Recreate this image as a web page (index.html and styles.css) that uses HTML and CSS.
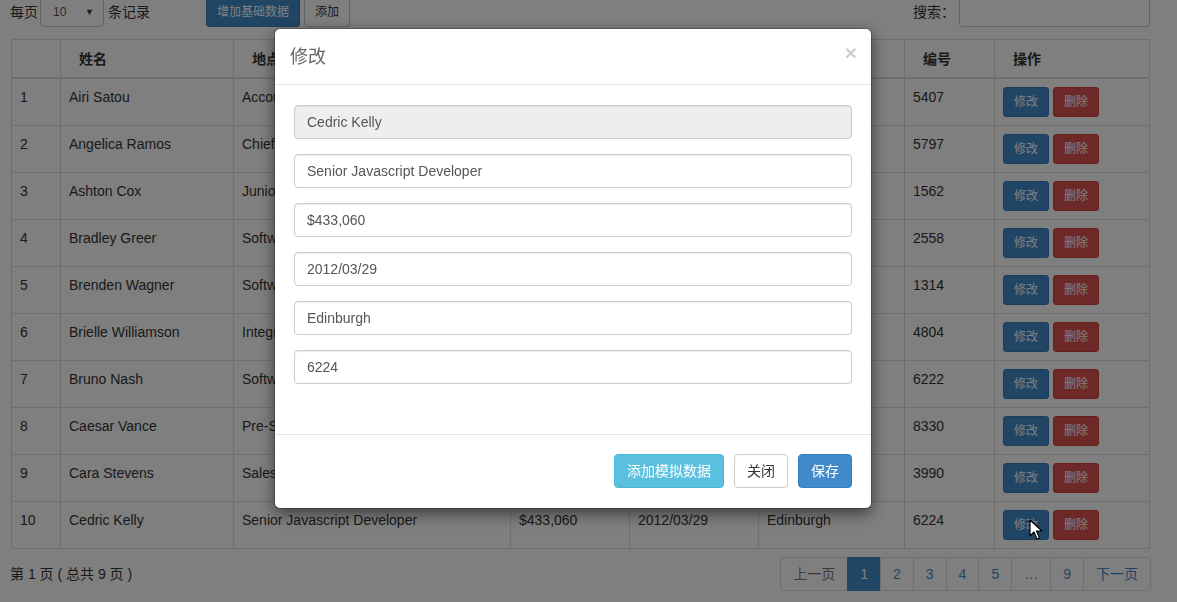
FILE: index.html
```html
<!DOCTYPE html>
<html lang="zh-CN">
<head>
<meta charset="utf-8">
<title>数据列表</title>
<link rel="stylesheet" href="styles.css">
</head>
<body>
<div class="page">
  <div class="toolbar">
    <div class="tools-left">
      <span class="lbl">每页</span>
      <div class="fake-select"><span>10</span><span class="caret">▼</span></div>
      <span class="lbl">条记录</span>
      <div class="btn-group">
        <button class="btn btn-sm btn-primary">增加基础数据</button>
        <button class="btn btn-sm btn-default">添加</button>
      </div>
    </div>
    <div class="tools-right">
      <span class="lbl">搜索：</span>
      <div class="search-input"></div>
    </div>
  </div>

  <table class="grid">
    <colgroup>
      <col class="c1"><col class="c2"><col class="c3"><col class="c4"><col class="c5"><col class="c6"><col class="c7"><col class="c8">
    </colgroup>
    <thead>
      <tr><th></th><th>姓名</th><th>地点</th><th>薪资</th><th>入职日期</th><th>城市</th><th>编号</th><th>操作</th></tr>
    </thead>
    <tbody>
      <tr><td>1</td><td>Airi Satou</td><td>Accountant</td><td>$162,700</td><td>2008/11/28</td><td>Tokyo</td><td>5407</td><td><button class="btn btn-sm btn-primary">修改</button> <button class="btn btn-sm btn-danger">删除</button></td></tr>
      <tr><td>2</td><td>Angelica Ramos</td><td>Chief Executive Officer (CEO)</td><td>$1,200,000</td><td>2009/10/09</td><td>London</td><td>5797</td><td><button class="btn btn-sm btn-primary">修改</button> <button class="btn btn-sm btn-danger">删除</button></td></tr>
      <tr><td>3</td><td>Ashton Cox</td><td>Junior Technical Author</td><td>$86,000</td><td>2009/01/12</td><td>San Francisco</td><td>1562</td><td><button class="btn btn-sm btn-primary">修改</button> <button class="btn btn-sm btn-danger">删除</button></td></tr>
      <tr><td>4</td><td>Bradley Greer</td><td>Software Engineer</td><td>$132,000</td><td>2012/10/13</td><td>London</td><td>2558</td><td><button class="btn btn-sm btn-primary">修改</button> <button class="btn btn-sm btn-danger">删除</button></td></tr>
      <tr><td>5</td><td>Brenden Wagner</td><td>Software Engineer</td><td>$206,850</td><td>2011/06/07</td><td>San Francisco</td><td>1314</td><td><button class="btn btn-sm btn-primary">修改</button> <button class="btn btn-sm btn-danger">删除</button></td></tr>
      <tr><td>6</td><td>Brielle Williamson</td><td>Integration Specialist</td><td>$372,000</td><td>2012/12/02</td><td>New York</td><td>4804</td><td><button class="btn btn-sm btn-primary">修改</button> <button class="btn btn-sm btn-danger">删除</button></td></tr>
      <tr><td>7</td><td>Bruno Nash</td><td>Software Engineer</td><td>$163,500</td><td>2011/05/03</td><td>London</td><td>6222</td><td><button class="btn btn-sm btn-primary">修改</button> <button class="btn btn-sm btn-danger">删除</button></td></tr>
      <tr><td>8</td><td>Caesar Vance</td><td>Pre-Sales Support</td><td>$106,450</td><td>2011/12/12</td><td>New York</td><td>8330</td><td><button class="btn btn-sm btn-primary">修改</button> <button class="btn btn-sm btn-danger">删除</button></td></tr>
      <tr><td>9</td><td>Cara Stevens</td><td>Sales Assistant</td><td>$145,600</td><td>2011/12/06</td><td>New York</td><td>3990</td><td><button class="btn btn-sm btn-primary">修改</button> <button class="btn btn-sm btn-danger">删除</button></td></tr>
      <tr><td>10</td><td>Cedric Kelly</td><td>Senior Javascript Developer</td><td>$433,060</td><td>2012/03/29</td><td>Edinburgh</td><td>6224</td><td><button class="btn btn-sm btn-primary">修改</button> <button class="btn btn-sm btn-danger">删除</button></td></tr>
    </tbody>
  </table>

  <div class="table-foot">
    <div class="info">第 1 页 ( 总共 9 页 )</div>
    <ul class="pager">
      <li class="disabled"><span>上一页</span></li>
      <li class="active"><span>1</span></li>
      <li><span>2</span></li>
      <li><span>3</span></li>
      <li><span>4</span></li>
      <li><span>5</span></li>
      <li class="disabled"><span class="ell">…</span></li>
      <li><span>9</span></li>
      <li><span>下一页</span></li>
    </ul>
  </div>
</div>

<div class="backdrop"></div>

<div class="modal">
  <div class="modal-header">
    <h4 class="modal-title">修改</h4>
    <span class="close">×</span>
  </div>
  <div class="modal-body">
    <div class="form-control readonly">Cedric Kelly</div>
    <div class="form-control">Senior Javascript Developer</div>
    <div class="form-control">$433,060</div>
    <div class="form-control">2012/03/29</div>
    <div class="form-control">Edinburgh</div>
    <div class="form-control">6224</div>
  </div>
  <div class="modal-footer">
    <button class="btn btn-info">添加模拟数据</button>
    <button class="btn btn-default">关闭</button>
    <button class="btn btn-primary">保存</button>
  </div>
</div>

<svg class="cursor" width="14" height="22" viewBox="0 0 14 22">
  <path d="M1 1 L1 17 L5 13 L8 20 L10.5 19 L7.5 12 L13 12 Z" fill="#fff" stroke="#000" stroke-width="1.2" stroke-linejoin="round"/>
</svg>
</body>
</html>
```

FILE: styles.css
```css
* { box-sizing: border-box; }
html, body { margin: 0; padding: 0; }
body {
  font-family: "Liberation Sans", "Noto Sans CJK SC", sans-serif;
  font-size: 14px;
  line-height: 20px;
  color: #333;
  background: #fff;
  overflow: hidden;
}
.page { padding: 0 26px 0 10px; }

.toolbar {
  display: flex;
  justify-content: space-between;
  align-items: center;
  height: 30px;
  margin-top: -3px;
}
.tools-left, .tools-right { display: flex; align-items: center; }
.lbl { font-size: 14px; }
.fake-select {
  width: 64px;
  height: 30px;
  margin: 0 4px 0 2px;
  border: 1px solid #ccc;
  border-radius: 3px;
  padding: 0 9px 0 12px;
  display: flex;
  align-items: center;
  justify-content: space-between;
  font-size: 12px;
  color: #555;
}
.fake-select .caret { font-size: 9px; color: #333; }
.btn-group { display: flex; gap: 4px; margin-left: 56px; }
.search-input {
  width: 191px;
  height: 30px;
  margin-left: 4px;
  margin-right: 1px;
  border: 1px solid #ccc;
  border-radius: 3px;
}

.btn {
  font-family: inherit;
  display: inline-block;
  border: 1px solid transparent;
  border-radius: 4px;
  font-size: 14px;
  line-height: 20px;
  padding: 6px 12px;
  cursor: pointer;
}
.btn-sm { font-size: 12px; line-height: 18px; padding: 5px 10px; border-radius: 3px; }
.btn-primary { background: #428bca; border-color: #357ebd; color: #fff; }
.btn-danger { background: #d9534f; border-color: #d43f3a; color: #fff; }
.btn-info { background: #5bc0de; border-color: #46b8da; color: #fff; }
.btn-default { background: #fff; border-color: #ccc; color: #333; }

.grid {
  width: 1138px;
  margin: 12px 0 0 1px;
  border-collapse: collapse;
  table-layout: fixed;
}
.grid .c1 { width: 49px; }
.grid .c2 { width: 173px; }
.grid .c3 { width: 277px; }
.grid .c4 { width: 119px; }
.grid .c5 { width: 129px; }
.grid .c6 { width: 146px; }
.grid .c7 { width: 90px; }
.grid .c8 { width: 155px; }
.grid th, .grid td {
  border: 1px solid #ddd;
  text-align: left;
  vertical-align: top;
  white-space: nowrap;
  overflow: hidden;
}
.grid th {
  font-weight: bold;
  padding: 9px 8px 8px 18px;
  border-bottom: 2px solid #ddd;
}
.grid td { padding: 8px; }
.grid td .btn { vertical-align: top; }

.table-foot {
  display: flex;
  justify-content: space-between;
  align-items: center;
  margin-top: 8px;
}
.info { font-size: 14px; }
.pager {
  display: flex;
  list-style: none;
  margin: 0;
  padding: 0;
}
.pager li span {
  display: block;
  padding: 6px 12px;
  line-height: 20px;
  border: 1px solid #ddd;
  margin-left: -1px;
  color: #428bca;
  background: #fff;
}
.pager li:first-child span { border-radius: 4px 0 0 4px; margin-left: 0; }
.pager li:last-child span { border-radius: 0 4px 4px 0; }
.pager li.disabled span { color: #777; }
.pager li .ell { padding: 6px 12px; }
.pager li.active span { background: #428bca; border-color: #428bca; color: #fff; }

.backdrop {
  position: fixed;
  inset: 0;
  background: rgba(0, 0, 0, 0.5);
}

.modal {
  position: fixed;
  top: 28px;
  left: 274px;
  width: 598px;
  background: #fff;
  border: 1px solid rgba(0, 0, 0, 0.2);
  border-radius: 6px;
  box-shadow: 0 5px 15px rgba(0, 0, 0, 0.5);
  background-clip: padding-box;
}
.modal-header {
  position: relative;
  padding: 15px 15px 14px;
  border-bottom: 1px solid #e5e5e5;
}
.modal-title {
  margin: 0;
  font-size: 18px;
  line-height: 26px;
  font-weight: normal;
  color: #666;
}
.close {
  position: absolute;
  right: 14px;
  top: 13px;
  font-size: 21px;
  font-weight: bold;
  line-height: 21px;
  color: #000;
  opacity: 0.2;
}
.modal-body {
  padding: 20px 19px 50px;
  display: flex;
  flex-direction: column;
  gap: 15px;
}
.form-control {
  height: 34px;
  padding: 6px 12px;
  border: 1px solid #ccc;
  border-radius: 4px;
  color: #555;
  font-size: 14px;
  line-height: 20px;
  box-shadow: inset 0 1px 1px rgba(0, 0, 0, 0.075);
}
.form-control.readonly { background: #eee; }
.modal-footer {
  border-top: 1px solid #e5e5e5;
  padding: 19px 19px 20px;
  display: flex;
  justify-content: flex-end;
  gap: 10px;
}

.cursor {
  position: fixed;
  left: 1029px;
  top: 519px;
}
```
